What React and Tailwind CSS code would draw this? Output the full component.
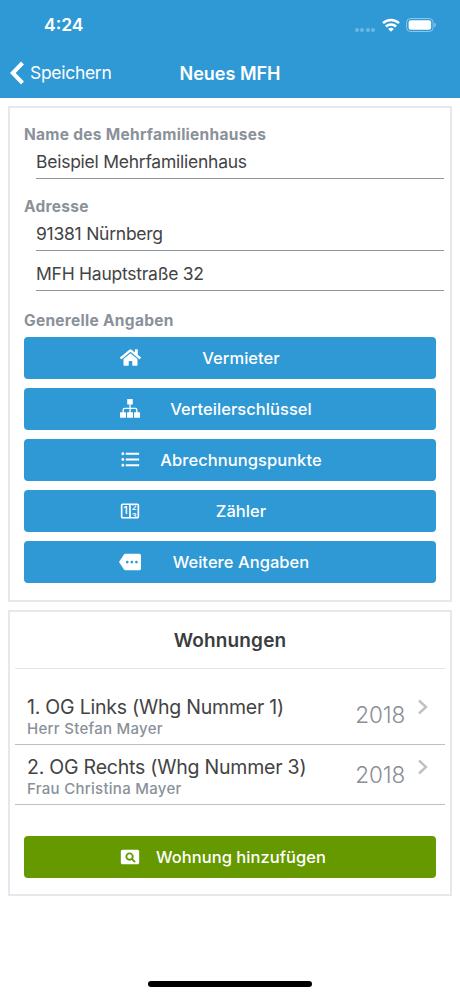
import { FaHome } from 'react-icons/fa'
import { MdFormatListBulleted, MdMore, MdPageview } from 'react-icons/md'

function SitemapIcon({ className }) {
  return (
    <svg viewBox="0 0 20 19" className={className} fill="currentColor">
      <rect x="7.2" y="0" width="5.6" height="5.6" rx="0.5" />
      <rect x="0" y="13.2" width="6" height="5.6" rx="0.5" />
      <rect x="7" y="13.2" width="6" height="5.6" rx="0.5" />
      <rect x="14" y="13.2" width="6" height="5.6" rx="0.5" />
      <path d="M10 5v9M3.2 14v-3.2q0-1.5 1.5-1.5h10.6q1.5 0 1.5 1.5V14" fill="none" stroke="currentColor" strokeWidth="1.3" />
    </svg>
  )
}

function CounterIcon({ className }) {
  return (
    <svg viewBox="0 0 24 24" className={className} fill="none" stroke="currentColor" strokeWidth="1.8">
      <clipPath id="dial">
        <rect x="13" y="5.6" width="7.4" height="12.8" />
      </clipPath>
      <rect x="2.9" y="4.6" width="18.2" height="14.8" rx="1" />
      <path d="M12 5v14" />
      <g fill="currentColor" stroke="none" fontFamily="Inter, sans-serif" fontWeight="600" textAnchor="middle">
        <text x="7.2" y="15.8" fontSize="10.5">1</text>
        <g clipPath="url(#dial)" fontSize="8.5">
          <text x="16.5" y="11.4">2</text>
          <text x="16.5" y="20.2">3</text>
        </g>
      </g>
    </svg>
  )
}

const actions = [
  { label: 'Vermieter', Icon: FaHome, size: 'h-[19px] w-[21px]' },
  { label: 'Verteilerschlüssel', Icon: SitemapIcon, size: 'h-[19px] w-[20px]' },
  { label: 'Abrechnungspunkte', Icon: MdFormatListBulleted, size: 'size-[23px]' },
  { label: 'Zähler', Icon: CounterIcon, size: 'size-[22px]' },
  { label: 'Weitere Angaben', Icon: MdMore, size: 'size-[22px]' },
]

const flats = [
  { title: '1. OG Links (Whg Nummer 1)', tenant: 'Herr Stefan Mayer', year: '2018' },
  { title: '2. OG Rechts (Whg Nummer 3)', tenant: 'Frau Christina Mayer', year: '2018' },
]

function ActionButton({ label, Icon, size, color = 'bg-[#2f99d6]' }) {
  return (
    <button className={`flex h-[42px] w-full items-center rounded-[4px] px-[95px] text-white ${color}`}>
      <span className="mb-px flex w-[22px] shrink-0 justify-center">
        <Icon className={`shrink-0 ${size}`} />
      </span>
      <span className="flex-1 whitespace-nowrap text-center text-[16.5px] font-medium tracking-[0.05px]">{label}</span>
    </button>
  )
}

function Field({ children }) {
  return (
    <div className="-mr-2 ml-3 flex h-[40px] items-center border-b border-[#8b9799] pt-[6px] text-[17.5px] leading-6 tracking-[-0.25px] text-[#434345]">
      {children}
    </div>
  )
}

function Label({ children }) {
  return <h2 className="text-[15.5px] font-bold leading-5 tracking-[0.28px] text-[#8a9199]">{children}</h2>
}

function StatusBar() {
  return (
    <div className="flex h-[50px] items-center justify-between pl-[44px] pr-[23px] text-white">
      <span className="mt-px text-[17.5px] font-semibold">4:24</span>
      <div className="flex items-center">
        <div className="mt-[9px] flex gap-[1.5px]">
          {[0, 1, 2, 3].map((i) => (
            <span key={i} className="size-1 rounded-full bg-white/30" />
          ))}
        </div>
        <svg viewBox="0 0 18 14" className="ml-[7px] h-[14px] w-[18px]" fill="none" stroke="currentColor" strokeWidth="2.5">
          <path d="M1 5.2a11.3 11.3 0 0 1 16 0" />
          <path d="M3.9 8.5a7.2 7.2 0 0 1 10.2 0" />
          <path d="M9 13.8 6.2 11a3.9 3.9 0 0 1 5.6 0z" fill="currentColor" stroke="none" />
        </svg>
        <svg viewBox="0 0 31 14" className="ml-[6px] h-[14px] w-[31px]">
          <rect x="0.6" y="0.5" width="26.5" height="13" rx="4" fill="none" stroke="white" strokeOpacity="0.45" />
          <rect x="2.6" y="2.3" width="22.5" height="9.4" rx="2.2" fill="white" />
          <path d="M28.4 4.8c1.8.6 1.8 3.8 0 4.4z" fill="white" fillOpacity="0.5" />
        </svg>
      </div>
    </div>
  )
}

export default function App() {
  return (
    <div className="flex h-[996px] w-[460px] flex-col overflow-hidden bg-white font-['Inter',sans-serif]">
      <header className="h-[98px] shrink-0 bg-[#2f99d6]">
        <StatusBar />
        <nav className="grid h-[46px] grid-cols-[1fr_auto_1fr] items-center text-white">
          <button className="flex items-center pl-[10px]">
            <svg viewBox="0 0 14 24" className="h-[24px] w-[14px]" fill="none" stroke="currentColor" strokeWidth="4">
              <path d="M12.5 2 2.8 12l9.7 10" />
            </svg>
            <span className="ml-[6px] mt-px text-[17.5px] tracking-[-0.3px]">Speichern</span>
          </button>
          <h1 className="text-[18px] font-semibold">Neues MFH</h1>
        </nav>
      </header>

      <main className="flex flex-col gap-2 px-2 pt-2">
        <section className="h-[496px] border-2 border-[#e6e8ee] px-[14px] pt-[17px]">
          <Label>Name des Mehrfamilienhauses</Label>
          <div className="-mt-[6px]">
            <Field>Beispiel Mehrfamilienhaus</Field>
          </div>
          <div className="mt-[18px]">
            <Label>Adresse</Label>
          </div>
          <div className="-mt-[6px]">
            <Field>91381 Nürnberg</Field>
            <Field>MFH Hauptstraße 32</Field>
          </div>
          <div className="mt-5">
            <Label>Generelle Angaben</Label>
          </div>
          <div className="mt-[6px] flex flex-col gap-[9px]">
            {actions.map((a) => (
              <ActionButton key={a.label} {...a} />
            ))}
          </div>
        </section>

        <section className="h-[286px] border-2 border-[#e6e8ee] px-[5px]">
          <h2 className="flex h-[57px] items-center justify-center border-b border-[#e1e4e8] pt-[2px] text-[19px] font-semibold tracking-[0.15px] text-[#3c3c3e]">
            Wohnungen
          </h2>
          <ul className="mt-[16px]">
            {flats.map((f) => (
              <li key={f.title} className="flex h-[60px] justify-between border-b border-[#bcc1c8] pl-3 pr-[16px]">
                <div className="pt-[10px]">
                  <p className="whitespace-nowrap text-[19.5px] leading-6 tracking-[-0.22px] text-[#434345]">{f.title}</p>
                  <p className="text-[15px] font-medium leading-5 tracking-[0.28px] text-[#8a9199]">{f.tenant}</p>
                </div>
                <div className="flex">
                  <span className="pt-[14px] text-[22.5px] font-light leading-8 tracking-[-0.15px] text-[#8a8e96]">{f.year}</span>
                  <svg viewBox="0 0 12 16" className="ml-[12px] mt-[14px] h-[16px] w-[12px]" fill="none" stroke="#bfc1c5" strokeWidth="2.4">
                    <path d="M2 1.5 9 8l-7 6.5" />
                  </svg>
                </div>
              </li>
            ))}
          </ul>
          <div className="mt-[31px] px-[9px]">
            <ActionButton
              label="Wohnung hinzufügen"
              Icon={MdPageview}
              size="size-[22px]"
              color="bg-[#669900]"
            />
          </div>
        </section>
      </main>

      <footer className="mt-auto flex justify-center pb-[9px]">
        <div className="h-[6px] w-[164px] rounded-full bg-black" />
      </footer>
    </div>
  )
}
